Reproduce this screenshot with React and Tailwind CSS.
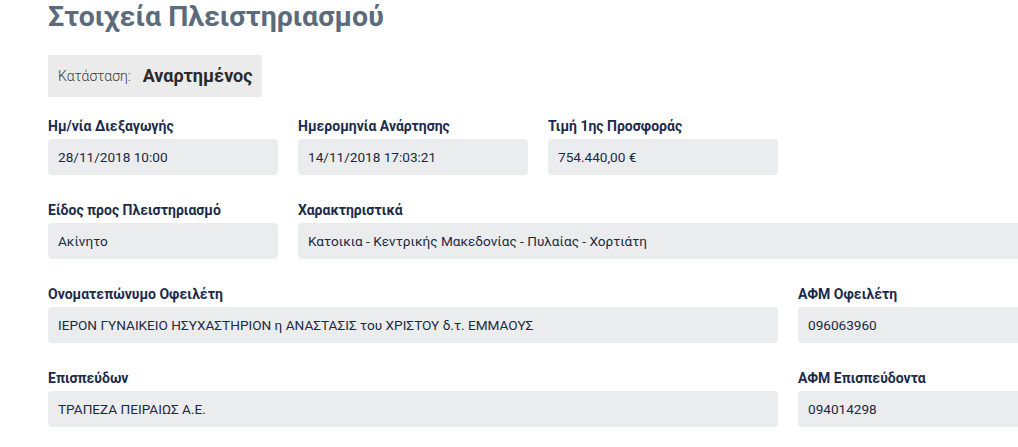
const fields = [
  { label: 'Ημ/νία Διεξαγωγής', value: '28/11/2018 10:00', span: 'col-span-1' },
  { label: 'Ημερομηνία Ανάρτησης', value: '14/11/2018 17:03:21', span: 'col-span-1' },
  { label: 'Τιμή 1ης Προσφοράς', value: '754.440,00 €', span: 'col-span-1' },
  { label: 'Είδος προς Πλειστηριασμό', value: 'Ακίνητο', span: 'col-span-1 col-start-1' },
  { label: 'Χαρακτηριστικά', value: 'Κατοικια - Κεντρικής Μακεδονίας - Πυλαίας - Χορτιάτη', span: 'col-span-3' },
  { label: 'Ονοματεπώνυμο Οφειλέτη', value: 'ΙΕΡΟΝ ΓΥΝΑΙΚΕΙΟ ΗΣΥΧΑΣΤΗΡΙΟΝ η ΑΝΑΣΤΑΣΙΣ του ΧΡΙΣΤΟΥ δ.τ. ΕΜΜΑΟΥΣ', span: 'col-span-3' },
  { label: 'ΑΦΜ Οφειλέτη', value: '096063960', span: 'col-span-1' },
  { label: 'Επισπεύδων', value: 'ΤΡΑΠΕΖΑ ΠΕΙΡΑΙΩΣ Α.Ε.', span: 'col-span-3' },
  { label: 'ΑΦΜ Επισπεύδοντα', value: '094014298', span: 'col-span-1' },
]

const Field = ({ label, value, span }) => (
  <div className={span}>
    <div className="text-sm font-bold leading-4 text-[#1c2b4b]">{label}</div>
    <div className="mt-[5px] h-9 rounded bg-[#ebecee] px-[10px] text-[13.6px] leading-9 text-[#1d2a3e]">
      {value}
    </div>
  </div>
)

export default function App() {
  return (
    <div className="h-[447px] w-full overflow-hidden bg-white font-['Roboto',sans-serif]">
      <div className="w-[980px] ml-12">
        <h1 className="text-[28.5px] font-bold leading-[1.2] text-[#5b6b7b]">Στοιχεία Πλειστηριασμού</h1>
        <div className="mt-[21px] inline-flex h-[42px] w-[214px] items-center bg-[#ebebeb] px-[10px]">
          <span className="text-sm font-light text-[#3a3a3a]">Κατάσταση:</span>
          <span className="ml-3 text-lg font-bold text-[#2a2a2a]">Αναρτημένος</span>
        </div>
        <div className="mt-[21px] grid grid-cols-4 gap-x-5 gap-y-[27px]">
          {fields.map((f) => (
            <Field key={f.label} {...f} />
          ))}
        </div>
      </div>
    </div>
  )
}
